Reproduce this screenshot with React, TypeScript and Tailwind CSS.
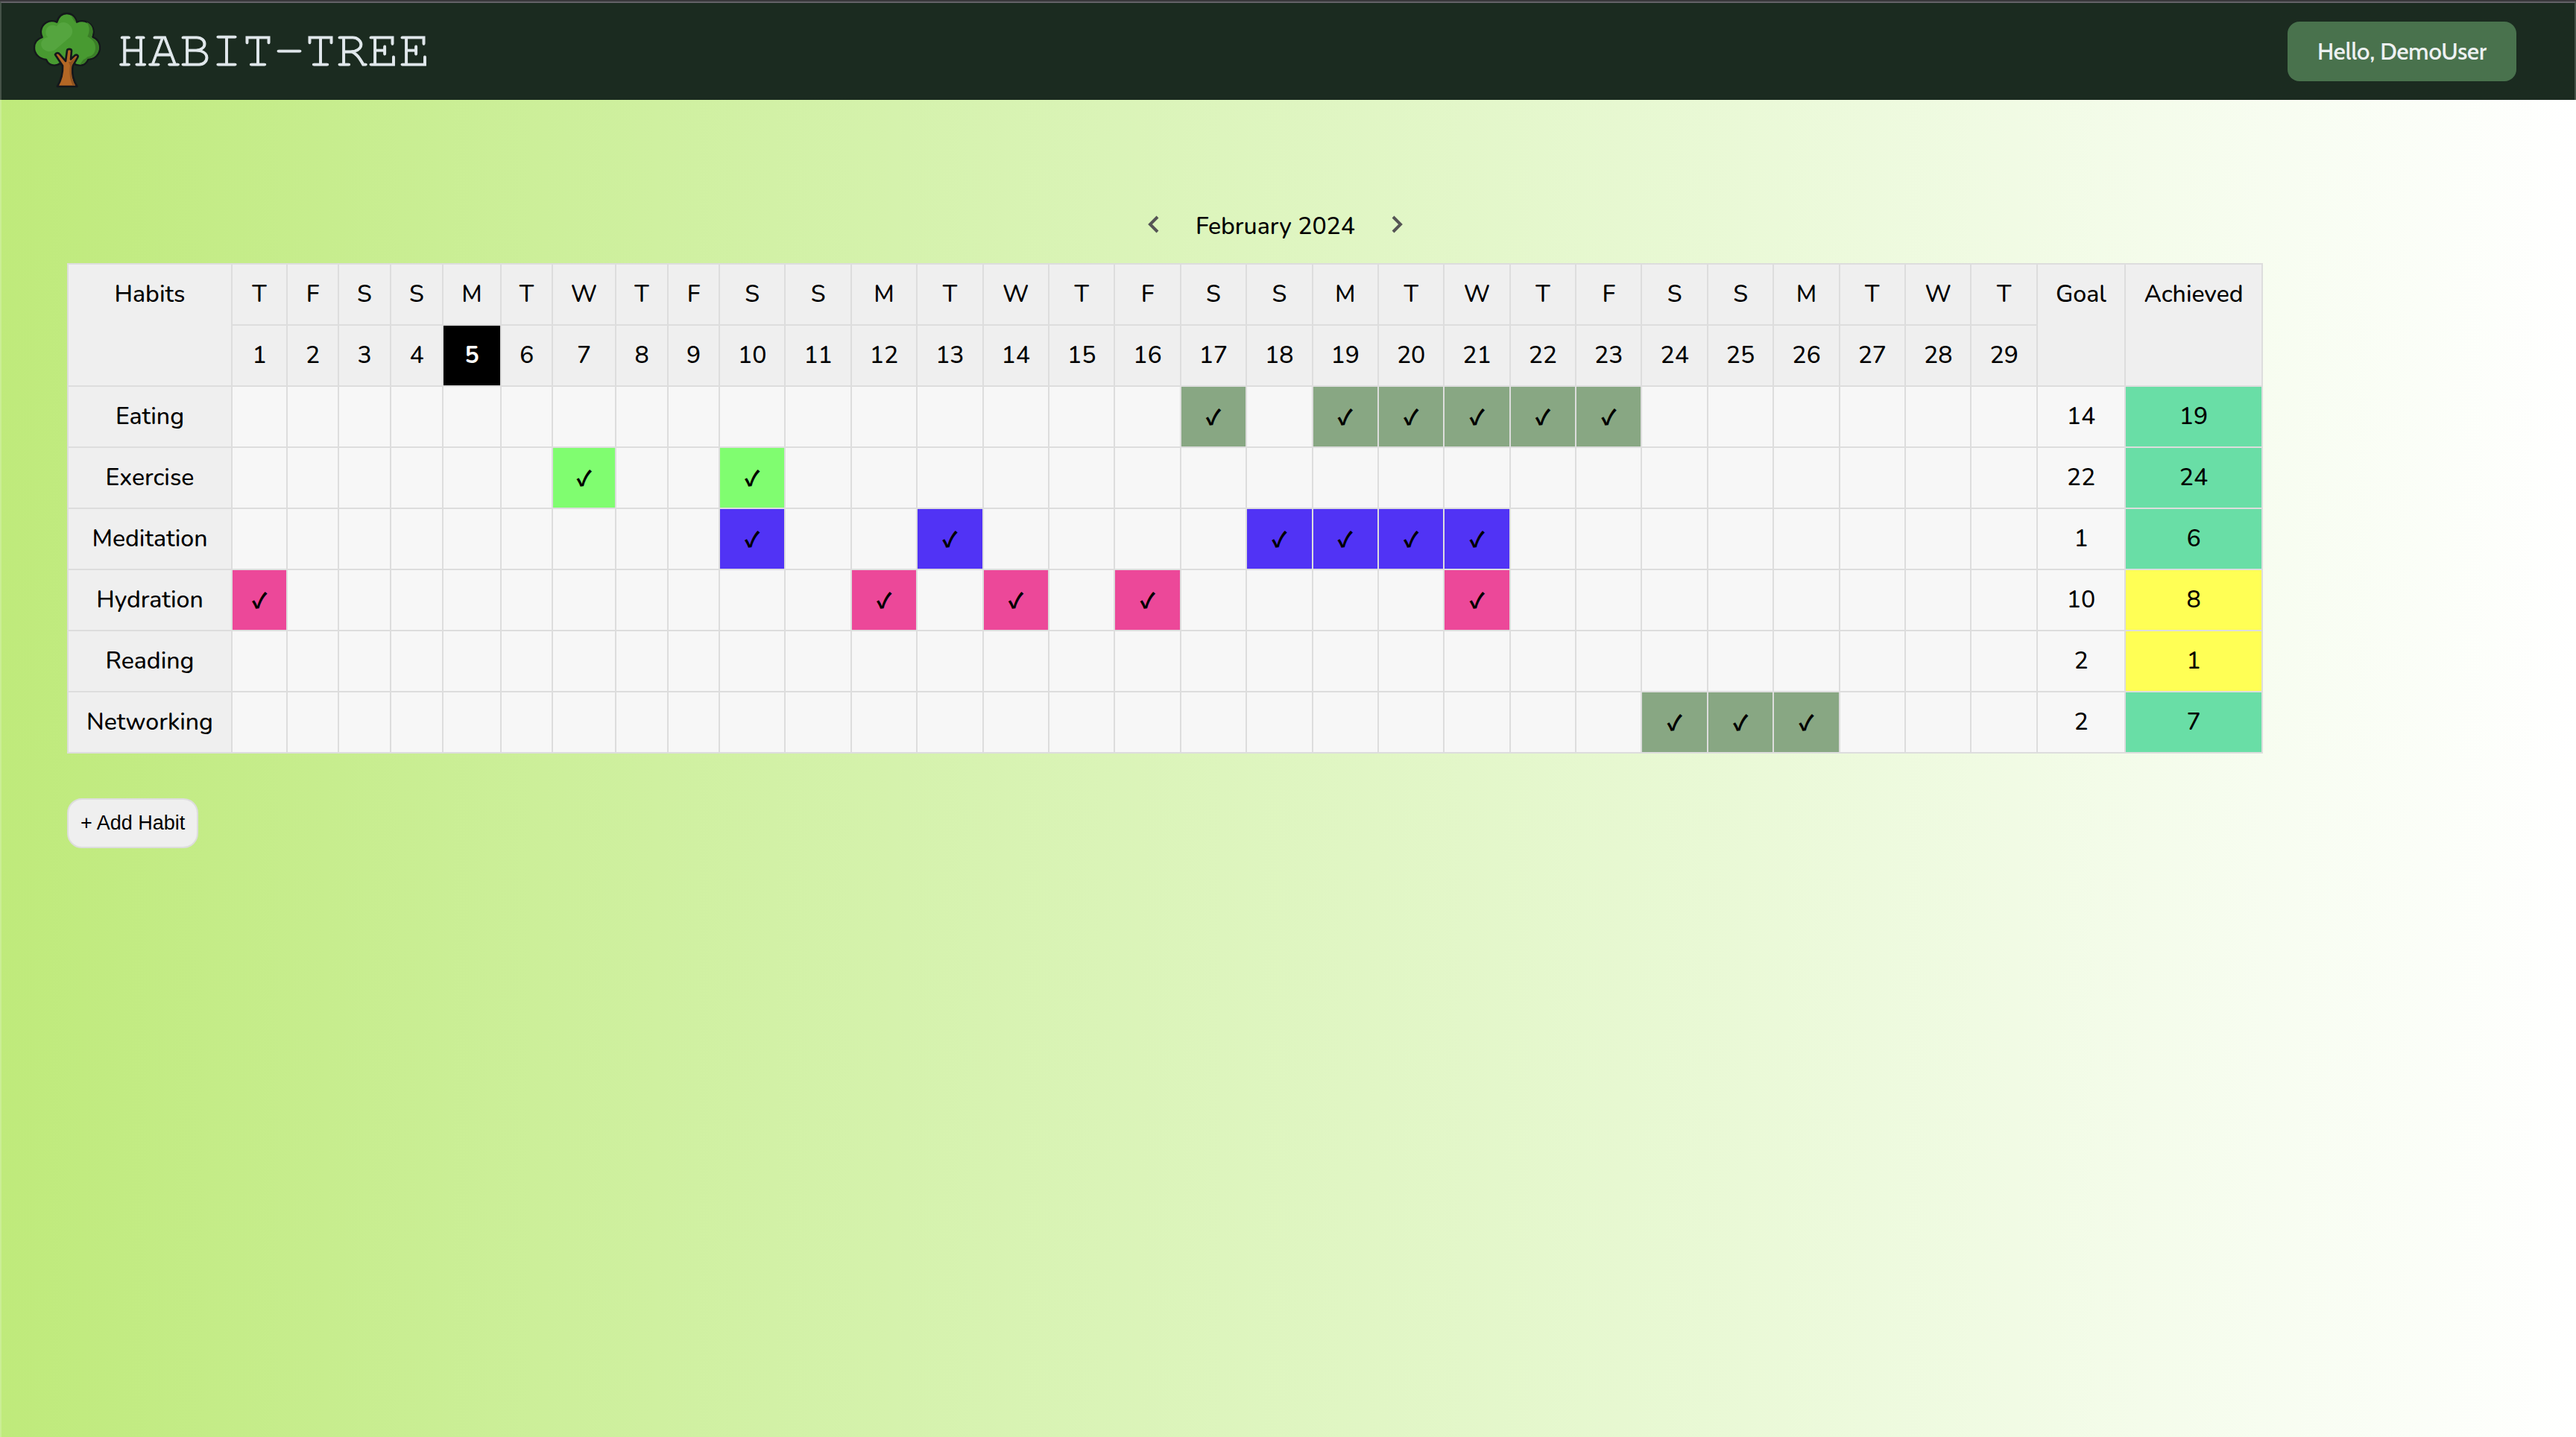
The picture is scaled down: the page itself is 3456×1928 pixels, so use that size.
import { useState } from 'react';

const WEEKDAYS = ['S', 'M', 'T', 'W', 'T', 'F', 'S'];
const MONTH = 'February 2024';
const FIRST_WEEKDAY = 4;
const TODAY = 5;
const DAYS = Array.from({ length: 29 }, (_, i) => ({
  date: i + 1,
  weekday: WEEKDAYS[(FIRST_WEEKDAY + i) % 7],
}));

const NARROW_COLUMNS = ['w-[74px]', 'w-[69px]', 'w-[70px]', 'w-[70px]', 'w-[78px]', 'w-[69px]', 'w-[85px]', 'w-[70px]', 'w-[69px]'];

type Habit = {
  name: string;
  color: string;
  done: number[];
  goal: number;
  achieved: number;
};

const HABITS: Habit[] = [
  { name: 'Eating', color: 'bg-[#88a783]', done: [17, 19, 20, 21, 22, 23], goal: 14, achieved: 19 },
  { name: 'Exercise', color: 'bg-[#80fd70]', done: [7, 10], goal: 22, achieved: 24 },
  { name: 'Meditation', color: 'bg-[#5133f5]', done: [10, 13, 18, 19, 20, 21], goal: 1, achieved: 6 },
  { name: 'Hydration', color: 'bg-[#ec4899]', done: [1, 12, 14, 16, 21], goal: 10, achieved: 8 },
  { name: 'Reading', color: 'bg-[#88a783]', done: [], goal: 2, achieved: 1 },
  { name: 'Networking', color: 'bg-[#88a783]', done: [24, 25, 26], goal: 2, achieved: 7 },
];

function TreeLogo() {
  return (
    <svg viewBox="45 45 270 306" className="h-[102px] w-[90px] shrink-0" aria-hidden="true">
      <path
        d="M139 86C146 62 161 51 179 51C197 51 212 62 219 86C250 72 285 92 287 124C287 132 286 139 283 146C302 154 312 170 312 189C312 214 292 236 265 236C258 252 245 261 229 260C220 260 212 257 206 252L152 252C146 257 138 260 129 260C114 260 102 251 96 237C68 234 48 214 48 189C48 170 60 154 80 147C76 139 74 131 75 122C78 92 108 72 139 86Z"
        fill="#489a31"
        stroke="#14171b"
        strokeWidth="7"
        strokeLinejoin="round"
      />
      <path d="M195 58C207 64 213 73 217 88C210 86 204 76 195 58Z" fill="#3a7d27" />
      <path d="M258 85C276 94 284 107 284 124C283 132 281 139 277 148C290 154 308 166 308 190C307 214 290 232 262 233C255 249 245 256 231 257L245 238C252 232 255 235 262 226C284 224 294 208 294 189C294 170 284 156 262 144C270 130 274 105 258 85Z" fill="#3a7d27" />
      <path d="M98 112C104 98 124 94 138 103C148 84 176 82 190 98C206 112 204 134 192 146L134 196C118 210 88 206 78 186C70 168 82 150 103 147C93 138 92 124 98 112Z" fill="#55a53f" />
      <path
        d="M132 217C135 209 145 208 150 215L174 243L180 200C181 193 197 192 198 201L195 236L211 220C220 214 227 222 222 229L203 262C198 290 203 318 220 345L141 345C154 322 164 298 162 262Z"
        fill="#b36725"
        stroke="#14171b"
        strokeWidth="8"
        strokeLinejoin="round"
      />
      <path d="M186 246L192 262C188 292 192 320 203 341L212 341C198 316 195 288 199 260L215 228L194 246Z" fill="#8f5220" />
    </svg>
  );
}

function MonthArrow({ label, d }: { label: string; d: string }) {
  return (
    <button type="button" aria-label={label} className="flex h-12 w-12 cursor-pointer items-center justify-center pb-1.5 text-[#555555]">
      <svg viewBox="0 0 16 24" className="h-6 w-4" fill="none" stroke="currentColor" strokeWidth="4" aria-hidden="true">
        <path d={d} />
      </svg>
    </button>
  );
}

function HabitRow({ habit }: { habit: Habit }) {
  const [done, setDone] = useState(habit.done);
  const toggle = (date: number) =>
    setDone(done.includes(date) ? done.filter((d) => d !== date) : [...done, date]);

  return (
    <tr>
      <th scope="row" className="h-[82px] border-2 border-[#dddddd] bg-[#efefef] font-medium">
        {habit.name}
      </th>
      {DAYS.map(({ date }) => {
        const checked = done.includes(date);
        return (
          <td key={date} className={'border-2 border-[#dddddd] ' + (checked ? habit.color : 'bg-[#f7f7f7]')}>
            <button
              type="button"
              aria-pressed={checked}
              aria-label={checked ? undefined : `${habit.name}, day ${date}`}
              onClick={() => toggle(date)}
              className="block h-20 w-full cursor-pointer font-['Source_Code_Pro','DejaVu_Sans',sans-serif] font-bold"
            >
              {checked ? '✓' : ''}
            </button>
          </td>
        );
      })}
      <td className="border-2 border-[#dddddd] bg-[#f7f7f7]">{habit.goal}</td>
      <td className={'border-2 border-[#dddddd] ' + (habit.achieved >= habit.goal ? 'bg-[#69dea6]' : 'bg-[#ffff55]')}>
        {habit.achieved}
      </td>
    </tr>
  );
}

export default function App() {
  return (
    <div className="flex min-h-screen flex-col font-[Nunito,Lato,sans-serif] text-[32px] leading-[48px] font-medium text-black">
      <div className="h-0.5 bg-[#39383b]" />
      <header className="flex h-[132px] items-center justify-between border-x-2 border-t-2 border-x-[#455248] border-t-[#636267] bg-[#1b2b20] pr-[78px] pl-[43px]">
        <a href="#" className="flex items-center gap-[22px] pb-1">
          <TreeLogo />
          <span className="font-['FreeMono','Liberation_Mono',monospace] text-[70px] leading-none font-normal text-[#e1e8ec] [-webkit-text-stroke:1px]">
            HABIT-TREE
          </span>
        </a>
        <button
          type="button"
          className="h-20 cursor-pointer rounded-2xl bg-[#49724d] px-10 font-[Cabin,Lato,sans-serif] text-[31px] font-medium text-[#edf1f2]"
        >
          Hello, DemoUser
        </button>
      </header>

      <main className="flex-1 border-x-2 border-white/20 bg-linear-to-r from-[#bfea7b] to-white bg-origin-border pt-[146px] pr-[122px] pl-[88px]">
        <div className="flex items-center justify-center gap-8">
          <MonthArrow label="Previous month" d="M13 2 3 12l10 10" />
          <h2>{MONTH}</h2>
          <MonthArrow label="Next month" d="m3 2 10 10L3 22" />
        </div>

        <table className="mt-[25px] w-[calc(100%-296px)] table-fixed border-collapse text-center">
          <colgroup>
            <col className="w-[220px]" />
            {DAYS.map(({ date }, i) => (
              <col key={date} className={NARROW_COLUMNS[i]} />
            ))}
            <col className="w-[118px]" />
            <col className="w-[184px]" />
          </colgroup>
          <thead className="bg-[#efefef]">
            <tr>
              <th scope="col" rowSpan={2} className="border-2 border-[#dddddd] pt-4 align-top font-medium">
                Habits
              </th>
              {DAYS.map(({ date, weekday }) => (
                <th key={date} scope="col" className="h-[82px] border-2 border-[#dddddd] font-medium">
                  {weekday}
                </th>
              ))}
              <th scope="col" rowSpan={2} className="border-2 border-[#dddddd] pt-4 align-top font-medium">
                Goal
              </th>
              <th scope="col" rowSpan={2} className="border-2 border-[#dddddd] pt-4 align-top font-medium">
                Achieved
              </th>
            </tr>
            <tr>
              {DAYS.map(({ date }) => (
                <th
                  key={date}
                  scope="col"
                  className={'h-[82px] border-2 border-[#dddddd] ' + (date === TODAY ? 'bg-black font-bold text-white' : 'font-medium')}
                >
                  {date}
                </th>
              ))}
            </tr>
          </thead>
          <tbody>
            {HABITS.map((habit) => (
              <HabitRow key={habit.name} habit={habit} />
            ))}
          </tbody>
        </table>

        <button
          type="button"
          className="mt-[60px] block h-[67px] cursor-pointer rounded-[20px] border-2 border-[#dddddd] bg-[#efefef] px-4 font-['Liberation_Sans',Arial,sans-serif] text-[27px] leading-none font-normal"
        >
          + Add Habit
        </button>
      </main>
    </div>
  );
}
